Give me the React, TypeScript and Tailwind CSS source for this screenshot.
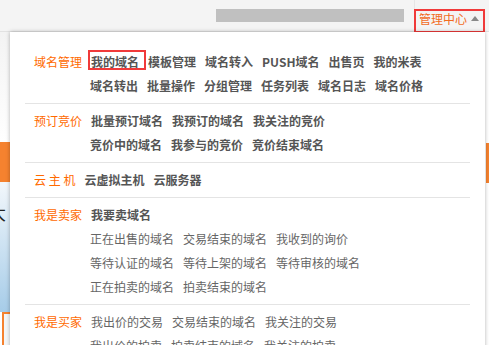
import React from 'react';

type Section = {
  label: string;
  rows: string[][];
  boldRows: number;
};

const sections: Section[] = [
  {
    label: '域名管理',
    rows: [
      ['我的域名', '模板管理', '域名转入', 'PUSH域名', '出售页', '我的米表'],
      ['域名转出', '批量操作', '分组管理', '任务列表', '域名日志', '域名价格'],
    ],
    boldRows: 2,
  },
  {
    label: '预订竞价',
    rows: [
      ['批量预订域名', '我预订的域名', '我关注的竞价'],
      ['竞价中的域名', '我参与的竞价', '竞价结束域名'],
    ],
    boldRows: 2,
  },
  {
    label: '云 主 机',
    rows: [['云虚拟主机', '云服务器']],
    boldRows: 1,
  },
  {
    label: '我是卖家',
    rows: [
      ['我要卖域名'],
      ['正在出售的域名', '交易结束的域名', '我收到的询价'],
      ['等待认证的域名', '等待上架的域名', '等待审核的域名'],
      ['正在拍卖的域名', '拍卖结束的域名'],
    ],
    boldRows: 1,
  },
  {
    label: '我是买家',
    rows: [
      ['我出价的交易', '交易结束的域名', '我关注的交易'],
      ['我出价的拍卖', '拍卖结束的域名', '我关注的拍卖'],
    ],
    boldRows: 0,
  },
];

const Item: React.FC<{ text: string; bold: boolean; boxed?: boolean }> = ({ text, bold, boxed }) => (
  <span
    className={`relative whitespace-nowrap ${bold ? 'font-bold text-[#555]' : 'text-[#666]'}`}
  >
    {text}
    {boxed && (
      <span className="absolute -left-[3px] -right-[7px] -top-[3px] bottom-[1px] border-2 border-[#f03a3a]" />
    )}
  </span>
);

const App: React.FC = () => {
  return (
    <div
      className="w-[489px] h-[345px] overflow-hidden bg-white text-[12px] flex flex-col"
      style={{ fontFamily: '"Noto Sans CJK SC", "Noto Sans", sans-serif' }}
    >
      {/* top bar */}
      <div className="h-[32px] shrink-0 bg-[#f4f4f4] border-b border-[#e2e2e2] flex items-center justify-end">
        <div className="w-[188px] h-[13px] bg-[#c0c0c0] mr-[10px]" />
        <div className="h-[32px] w-[75px] border-l border-[#e6e6e6] pt-[9px] pl-[0px]">
          <div className="w-[71px] h-[24px] -ml-[1px] border-2 border-[#f03a3a] flex items-center pl-[3px]">
            <span className="text-[#f26b1d] leading-[18px] -mt-[4px]">管理中心</span>
            <svg className="ml-[4px] -mt-[5px]" width="8" height="5" viewBox="0 0 8 5">
              <path d="M0 5 L4 0 L8 5 Z" fill="#888" />
            </svg>
          </div>
        </div>
      </div>

      <div className="flex flex-1 min-h-0">
        {/* page behind, left edge */}
        <div className="w-[10px] shrink-0 flex flex-col overflow-hidden">
          <div className="h-[110px] bg-gradient-to-b from-[#f3f3f3] to-white" />
          <div className="h-[40px] bg-[#f5822f]" />
          <div className="h-[130px] bg-gradient-to-b from-[#f2f7fb] to-[#a6cce8] pt-[20px]">
            <div className="-ml-[12px] text-[18px] leading-[20px] text-[#222]">大</div>
          </div>
          <div className="flex-1 ml-[2px] border-l-2 border-t-2 border-[#f5822f] bg-[#f3f6f8]" />
        </div>

        {/* dropdown panel */}
        <div className="relative z-10 w-[475px] shrink-0 h-[330px] bg-white shadow-[0_0_4px_rgba(0,0,0,0.3)] px-[15px] pt-[13px]">
          {sections.map((s, si) => (
            <div
              key={s.label}
              className={`py-[5px] pl-[9px] ${si < sections.length - 1 ? 'border-b border-[#e4e4e4]' : ''}`}
            >
              {s.rows.map((row, ri) => (
                <div key={ri} className={`flex h-[24px] items-center gap-x-[9px] ${ri > 0 ? 'pl-[56px]' : ''}`}>
                  {ri === 0 && (
                    <span className="text-[#ff6a00] whitespace-nowrap">{s.label}</span>
                  )}
                  {row.map((t) => (
                    <Item key={t} text={t} bold={ri < s.boldRows} boxed={t === '我的域名'} />
                  ))}
                </div>
              ))}
            </div>
          ))}
        </div>

        {/* page behind, right edge */}
        <div className="flex-1 flex flex-col pt-[111px]">
          <div className="h-[40px] ml-[1px] bg-[#f5822f]" />
        </div>
      </div>
    </div>
  );
};

export default App;
